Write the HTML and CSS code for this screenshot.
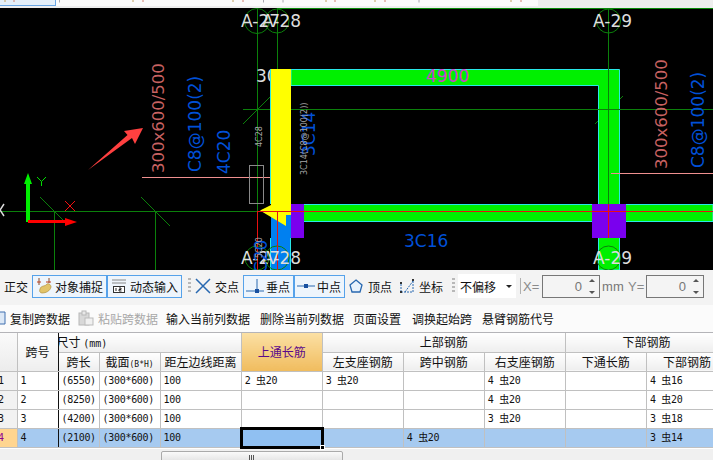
FILE: index.html
```html
<!DOCTYPE html>
<html lang="zh">
<head>
<meta charset="utf-8">
<title>梁平法表格</title>
<link rel="stylesheet" href="styles.css">
</head>
<body>
<div class="app">
  <svg class="top-strip" viewBox="0 0 713 8" width="713" height="8" xmlns="http://www.w3.org/2000/svg">
    <rect class="strip-bg" x="0" y="0" width="538" height="8"/>
    <rect class="strip-end" x="538" y="0" width="175" height="8"/>
    <rect class="strip-foot" x="0" y="6" width="713" height="2"/>
    <rect class="strip-tab" x="-1" y="-1" width="56.500" height="6.500"/>
    <path class="tick-a" d="M5 0V2M133 0V2M233 0V2M326 0V2M375 0V2M511 0V2"/>
    <path class="tick-b" d="M14 0V2M143 0V2M243 0V2M335 0V2M385 0V2M521 0V2"/>
    <path class="tick-c" d="M59.500 0V2.500M263.500 0V2.500M283 0V2.500M419 0V2.500"/>
  </svg>

  <svg class="cad" viewBox="0 8 713 262" width="713" height="262" xmlns="http://www.w3.org/2000/svg">
    <defs>
      <linearGradient id="labelLeft" gradientUnits="userSpaceOnUse" x1="241" x2="300" y1="0" y2="0">
        <stop offset="0.5" stop-color="#dddddd"/><stop offset="0.5" stop-color="#e08a3c"/>
        <stop offset="0.83" stop-color="#e08a3c"/><stop offset="0.83" stop-color="#dddddd"/>
      </linearGradient>
      <linearGradient id="labelRight" gradientUnits="userSpaceOnUse" x1="593" x2="632" y1="0" y2="0">
        <stop offset="0.14" stop-color="#dddddd"/><stop offset="0.14" stop-color="#d848d8"/>
        <stop offset="0.69" stop-color="#d848d8"/><stop offset="0.69" stop-color="#dddddd"/>
      </linearGradient>
    </defs>
    <rect x="0" y="8" width="713" height="262" fill="#000"/>
    <line x1="277" y1="8.500" x2="713" y2="8.500" stroke="#0a8a0a"/>

    <g class="axis-lines">
      <line x1="257.500" y1="9" x2="257.500" y2="270"/>
      <line x1="277.500" y1="9" x2="277.500" y2="270"/>
      <line x1="608.500" y1="9" x2="608.500" y2="270"/>
      <line x1="54.500" y1="211" x2="54.500" y2="270"/>
      <line x1="155.500" y1="211" x2="155.500" y2="270"/>
      <line x1="243" y1="109.500" x2="713" y2="109.500"/>
      <line x1="0" y1="211.500" x2="713" y2="211.500"/>
      <line x1="243" y1="124" x2="270" y2="97"/>
      <line x1="595" y1="124" x2="623" y2="96"/>
      <line x1="40" y1="197" x2="63" y2="220"/>
      <line x1="141" y1="197" x2="170" y2="226"/>
      <circle cx="257" cy="21" r="12.500"/>
      <circle cx="277" cy="21" r="12"/>
      <circle cx="608.500" cy="21" r="12"/>
    </g>

    <text class="lbl" x="256" y="82">30</text>

    <path class="beam" d="M291 69.500H619.500V270H598.500V85.500H291Z"/>
    <rect class="beam" x="298" y="204.500" width="415" height="17"/>
    <rect class="column" x="592" y="204" width="34" height="34"/>
    <rect class="blue-col" x="271" y="213" width="20" height="57"/>
    <path class="cyan" d="M270.500 69V204M270.500 238V270M290.500 238V270"/>
    <polygon class="yellow" points="271,69 291,69 291,204 291,215 286,215 286,226 260,210.500 271,205"/>
    <rect class="column" x="291" y="204" width="13" height="34"/>

    <g class="axis-lines">
      <circle cx="257" cy="258" r="12"/>
      <circle cx="277" cy="258" r="12"/>
      <circle cx="608.500" cy="258" r="12"/>
      <line x1="608.500" y1="9" x2="608.500" y2="204"/>
      <line x1="598" y1="109.500" x2="620" y2="109.500"/>
    </g>
    <g class="red-lines">
      <line x1="257" y1="211.500" x2="713" y2="211.500"/>
      <line x1="257.500" y1="211" x2="257.500" y2="270"/>
      <line x1="277.500" y1="211" x2="277.500" y2="270"/>
      <line x1="608.500" y1="204" x2="608.500" y2="238"/>
    </g>

    <line class="pink" x1="142" y1="177.500" x2="270" y2="177.500"/>
    <line class="pink" x1="611" y1="173.500" x2="713" y2="173.500"/>
    <rect class="grey-box" x="249.500" y="165.500" width="14" height="38"/>

    <text class="lbl" x="241" y="27">A-27</text>
    <text class="lbl" x="262" y="27">A-28</text>
    <text class="lbl" x="593" y="27">A-29</text>
    <text class="lbl" x="241" y="264" fill="url(#labelLeft)">A-27</text>
    <text class="lbl" x="262" y="264" fill="url(#labelLeft)">A-28</text>
    <text class="lbl" x="593" y="264" fill="url(#labelRight)">A-29</text>

    <text class="span-len" x="426" y="82">4900</text>
    <text class="rebar" x="404" y="247">3C16</text>

    <text class="size" transform="translate(164 173) rotate(-90)">300x600/500</text>
    <text class="rebar" transform="translate(201 172) rotate(-90)">C8@100(2)</text>
    <text class="rebar" transform="translate(230 174) rotate(-90)">4C20</text>
    <text class="size" transform="translate(667 169) rotate(-90)">300x600/500</text>
    <text class="rebar" transform="translate(704 168) rotate(-90)">C8@100(2)</text>
    <text class="rebar" transform="translate(315 156) rotate(-90)">3C14</text>
    <text class="rebar" transform="translate(267 284) rotate(-90)">3C20</text>
    <text class="tiny" transform="translate(262 147) rotate(-90)">4C28</text>
    <text class="tiny" transform="translate(307 175) rotate(-90)">3C14(C8@100(2))</text>
    <text class="tiny" transform="translate(262 258) rotate(-90)">5C20</text>

    <polygon class="arrow" points="143,128 124,131 127.500,135 88,170 132,138 135,144"/>

    <rect class="axis-y" x="26" y="181" width="4" height="41"/>
    <polygon class="axis-y" points="28,173 32,184 24,184"/>
    <rect class="axis-x" x="28" y="220" width="40" height="3"/>
    <polygon class="axis-x" points="77,222 65,218 65,226"/>
    <path class="tag-y" d="M37 177L41.500 181.500L46 177M41.500 181.500V186"/>
    <path class="tag-x" d="M65 201L75 211M75 201L65 211"/>
    <path class="edge-mark" d="M4 204L0 210L4 216"/>
  </svg>

  <div class="toolbar snap">
    <span class="tb-text first">正交</span>
    <span class="tb-btn on wide">
      <svg class="ico" viewBox="0 0 16 16"><path d="M3 0V7M13 0V5" stroke="#8a4a28" fill="none"/><path d="M1 4H5M10 4H15" stroke="#c04020"/><path d="M4 11C5 7 9 9 11 6C13 5 15 7 15 9C14 13 10 15 6 15C4 15 3 13 4 11Z" fill="#e2c46a" stroke="#b09040" stroke-width="0.700"/></svg>
      对象捕捉
    </span>
    <span class="tb-btn on wide">
      <svg class="ico" viewBox="0 0 16 16"><path d="M1 2H15M1 5H15" stroke="#888" fill="none"/><rect x="2.500" y="8.500" width="11" height="6" fill="#fff" stroke="#333"/><path d="M5 10V13M8 10H10V11.500H8V13H10.500" stroke="#222" fill="none"/></svg>
      动态输入
    </span>
    <span class="grip"></span>
    <span class="tb-btn plain cross">
      <svg class="ico" viewBox="0 0 16 16"><path d="M1 1L15 15M15 1L1 15" stroke="#2868b0" stroke-width="1.500"/></svg>
    </span>
    <span class="tb-text cross-label">交点</span>
    <span class="tb-btn on mid">
      <svg class="ico-w" viewBox="0 0 20 16"><path d="M1 13H19M12 1V13" stroke="#2868b0"/><rect x="10" y="11" width="4" height="4" fill="#1850a0"/></svg>
      垂点
    </span>
    <span class="tb-btn on mid">
      <svg class="ico-w" viewBox="0 0 20 16"><path d="M1 8H19" stroke="#2868b0"/><rect x="8" y="6" width="4" height="4" fill="#1850a0"/></svg>
      中点
    </span>
    <span class="tb-btn plain pent">
      <svg class="ico-p" viewBox="0 0 14 14"><path d="M7 1L13 6L11 13H3L1 6Z" fill="#e8f2fc" stroke="#2868b0" stroke-width="1.300"/></svg>
      顶点
    </span>
    <span class="tb-btn plain coord">
      <svg class="ico" viewBox="0 0 16 16"><path d="M2 14H14M2 14V6M14 14L14 3M6 14L14 3" stroke="#2868b0" stroke-dasharray="2 1" fill="none"/><rect x="13" y="1" width="2" height="2" fill="#333"/><rect x="1" y="4" width="2" height="2" fill="#333"/><rect x="1" y="13" width="2" height="2" fill="#333"/></svg>
      坐标
    </span>
    <span class="grip grip-late"></span>
    <span class="dropdown"><span>不偏移</span><i class="caret"></i></span>
    <span class="sep"></span>
    <span class="dim">X=</span>
    <span class="spin"><span>0</span><i class="spin-arrows"></i></span>
    <span class="unit">mm</span>
    <span class="dim y-label">Y=</span>
    <span class="spin"><span>0</span><i class="spin-arrows"></i></span>
  </div>

  <div class="toolbar actions">
    <span class="act copy">
      <svg class="ico-s" viewBox="0 0 6 14"><path d="M-6 1H5V13H-6Z" fill="#dce8f6" stroke="#4070b0"/></svg>
      复制跨数据
    </span>
    <span class="act paste off">
      <svg class="ico" viewBox="0 0 16 16"><rect x="1" y="3" width="10" height="12" fill="#d8d8d8" stroke="#b8b8b8"/><rect x="4" y="1" width="4" height="4" fill="#e8e8e8" stroke="#b8b8b8"/><rect x="7" y="8" width="8" height="7" fill="#f0f0f0" stroke="#bbb"/></svg>
      粘贴跨数据
    </span>
    <span class="act input">输入当前列数据</span>
    <span class="act del">删除当前列数据</span>
    <span class="act page">页面设置</span>
    <span class="act swap">调换起始跨</span>
    <span class="act code">悬臂钢筋代号</span>
  </div>

  <div class="grid-wrap">
    <table class="grid">
      <colgroup>
        <col class="c-row"><col class="c-no"><col class="c-len"><col class="c-sec"><col class="c-dist">
        <col class="c-std"><col class="c-std"><col class="c-std"><col class="c-std"><col class="c-std"><col class="c-std">
      </colgroup>
      <thead>
        <tr>
          <th class="corner" rowspan="2"></th>
          <th class="thick" rowspan="2">跨号</th>
          <th class="group-left" colspan="3"><span>尺寸 <span class="mono">(mm)</span></span></th>
          <th class="active" rowspan="2">上通长筋</th>
          <th colspan="3">上部钢筋</th>
          <th colspan="2">下部钢筋</th>
        </tr>
        <tr>
          <th>跨长</th>
          <th>截面<span class="mono small">(B*H)</span></th>
          <th>距左边线距离</th>
          <th>左支座钢筋</th>
          <th>跨中钢筋</th>
          <th>右支座钢筋</th>
          <th>下通长筋</th>
          <th>下部钢筋</th>
        </tr>
      </thead>
      <tbody>
        <tr>
          <td class="rh">1</td><td class="thick">1</td><td>(6550)</td><td>(300*600)</td><td>100</td>
          <td>2 虫20</td><td>3 虫20</td><td></td><td>4 虫20</td><td></td><td>4 虫16</td>
        </tr>
        <tr>
          <td class="rh">2</td><td class="thick">2</td><td>(8250)</td><td>(300*600)</td><td>100</td>
          <td></td><td></td><td></td><td>4 虫20</td><td></td><td>4 虫20</td>
        </tr>
        <tr>
          <td class="rh">3</td><td class="thick">3</td><td>(4200)</td><td>(300*600)</td><td>100</td>
          <td></td><td></td><td></td><td>3 虫20</td><td></td><td>3 虫18</td>
        </tr>
        <tr class="sel">
          <td class="rh">4</td><td class="thick">4</td><td>(2100)</td><td>(300*600)</td><td>100</td>
          <td class="cur"><i class="handle"></i></td><td></td><td>4 虫20</td><td></td><td></td><td>3 虫14</td>
        </tr>
      </tbody>
    </table>
  </div>
  <div class="hscroll"><div class="thumb"><span></span></div></div>
</div>
</body>
</html>
```

FILE: styles.css
```css
* { box-sizing: border-box; }
html, body { margin: 0; padding: 0; background: #f2f2f2; }
body { font-family: "Noto Sans CJK SC", "Liberation Sans", sans-serif; font-size: 12px; color: #111; }
.app { width: 713px; height: 460px; display: flex; flex-direction: column; overflow: hidden; }

.top-strip { display: block; flex: none; }
.strip-bg { fill: #fbfbfb; }
.strip-end { fill: #eeeeee; }
.strip-foot { fill: #eeeeee; }
.strip-tab { fill: #e4eff9; stroke: #6aa6e4; }
.tick-a { stroke: #c0a060; }
.tick-b { stroke: #d08070; }
.tick-c { stroke: #a8a8b0; }

.cad { display: block; flex: none; }
.axis-lines line, .axis-lines circle { stroke: #0b800b; stroke-width: 1; fill: none; }
.beam { fill: #00f000; stroke: #28e8e8; stroke-width: 1; }
.column { fill: #7a00ee; }
.blue-col { fill: #0080f0; }
.cyan { stroke: #28e8e8; fill: none; }
.yellow { fill: #ffff00; }
.red-lines line { stroke: #e81010; stroke-width: 1; }
.pink { stroke: #f09090; stroke-width: 1; }
.grey-box { fill: none; stroke: #8a8a8a; }
.lbl { font-family: "DejaVu Sans", sans-serif; font-size: 17px; fill: #dddddd; }
.span-len { font-family: "DejaVu Sans", sans-serif; font-size: 17px; fill: #d040d0; }
.rebar { font-family: "DejaVu Sans", sans-serif; font-size: 17px; fill: #0050d8; }
.size { font-family: "DejaVu Sans", sans-serif; font-size: 16.500px; fill: #c86262; }
.tiny { font-family: "DejaVu Sans", sans-serif; font-size: 8px; fill: #a8a8a8; }
.arrow { fill: #ff4040; }
.axis-y { fill: #00f000; }
.axis-x { fill: #ff0000; }
.tag-y { stroke: #00e000; fill: none; }
.tag-x { stroke: #f01010; fill: none; }
.edge-mark { stroke: #ddd; stroke-width: 1.500; fill: none; }

.toolbar { display: flex; align-items: center; flex: none; white-space: nowrap; }
.snap { height: 35px; padding-bottom: 3px; background: #f3f3f3; }
.actions { height: 28px; background: #fbfbfb; border-bottom: 1px solid #b4b4b8; padding-bottom: 1px; }

.tb-text.first { margin-left: 4px; width: 28px; }
.tb-btn { display: flex; align-items: center; height: 23px; }
.tb-btn.on { background: #eef5fc; border: 1px solid #56a2ea; }
.tb-btn.wide { width: 75px; padding-left: 3px; gap: 3px; }
.tb-btn.mid { width: 51px; padding-left: 1px; gap: 1px; }
.tb-btn.pent { margin-left: 4px; gap: 5px; }
.tb-btn.coord { margin-left: 7px; gap: 4px; }
.cross-label { margin-left: 4px; margin-right: 4px; }
.ico { width: 16px; height: 16px; flex: none; }
.ico-w { width: 20px; height: 16px; flex: none; }
.ico-p { width: 14px; height: 14px; flex: none; }
.ico-s { width: 6px; height: 14px; flex: none; }
.grip { width: 3px; height: 16px; margin: 0 4px 0 6px; flex: none;
  background: repeating-linear-gradient(#b8b8b8 0 2px, transparent 2px 4px); }
.grip-late { margin: 0 3px 0 9px; }

.dropdown { display: flex; align-items: center; justify-content: space-between; width: 58px; height: 24px; padding: 0 4px 0 2px; background: #fff; }
.caret { width: 0; height: 0; border: 3px solid transparent; border-top: 3px solid #222; border-bottom: 0; }
.sep { width: 1px; height: 16px; margin: 0 2px 0 4px; background: #b0b0b0; }
.dim { color: #8a8a8a; width: 16px; font-family: "Liberation Sans", sans-serif; font-size: 13px; }
.y-label { margin-left: 5px; width: 15px; }
.unit { color: #777; font-family: "Liberation Sans", sans-serif; font-size: 13px; width: 21px; margin-left: 2px; }
.spin { display: flex; align-items: center; justify-content: flex-end; gap: 6px; width: 58px; height: 23px; margin-left: 3px;
  background: #f4f4f4; border: 1px solid #777; padding-right: 3px; color: #777; font-family: "Liberation Sans", sans-serif; font-size: 13px; }
.spin-arrows { display: block; width: 8px; height: 15px; position: relative; }
.spin-arrows::before, .spin-arrows::after { content: ""; position: absolute; left: 1px; width: 0; height: 0; border: 3px solid transparent; }
.spin-arrows::before { top: 0; border-top: 0; border-bottom: 3px solid #555; }
.spin-arrows::after { bottom: 0; border-bottom: 0; border-top: 3px solid #555; }

.act { display: flex; align-items: center; }
.copy { gap: 4px; width: 78px; }
.paste { gap: 4px; width: 88px; }
.off { color: #a8a8a8; }
.input { width: 94px; }
.del { width: 93px; }
.page { width: 59px; }
.swap { width: 70px; }
.code { width: 72px; }

.grid-wrap { height: 118px; flex: none; overflow: hidden; background: #f0f0f0; }
.grid { border-collapse: collapse; table-layout: fixed; width: 728px; background: #fff; font-family: "Noto Sans CJK SC", sans-serif; font-size: 12px; }
.c-row { width: 17px; }
.c-no { width: 41px; }
.c-len { width: 41px; }
.c-sec { width: 61px; }
.c-dist { width: 81px; }
.c-std { width: 81px; }
.grid th, .grid td { border: 1px solid #c0c0c0; padding: 0; overflow: hidden; white-space: nowrap; height: 19px; line-height: 14px; }
.grid th { font-weight: 400; background: linear-gradient(#ffffff, #eeeeee); text-align: center; }
.grid tr:first-child th { border-top: 0; }
.grid td { padding-left: 3px; font-family: "DejaVu Sans Mono", "Noto Sans CJK SC", monospace; font-size: 10px; letter-spacing: -0.300px; }
.grid th.group-left { text-align: left; }
.grid th.group-left > span { margin-left: -2px; }
.mono { font-family: "DejaVu Sans Mono", monospace; font-size: 10px; line-height: 1; }
.small { font-size: 8px; }
.grid .corner { background: linear-gradient(#fafafa, #ececec); border-left: 0; }
.grid .thick { border-right: 1px solid #111; }
.grid th.active { background: linear-gradient(#fbe0a4, #f0bc5e); color: #5a0a8a; }
.grid td.rh { background: #f2f2f2; padding-left: 0; text-indent: -2px; border-left: 0; }
.sel td { background: #a6caf0; }
.grid .sel td.rh { background: #ffd590; color: #900090; }
.grid td.cur { background: #90c0f2; border: 3px solid #000; overflow: visible; position: relative; padding: 0; }
.handle { position: absolute; right: -4px; bottom: -4px; width: 5px; height: 5px; background: #000; border: 1px solid #fff; z-index: 1; }

.hscroll { height: 9px; flex: none; padding-left: 161px; background: #f0f0f0; }
.thumb { display: flex; justify-content: center; width: 182px; height: 11px; background: linear-gradient(#fafafa, #e4e4e4); border: 1px solid #aaa; border-radius: 2px 2px 0 0; }
.thumb span { width: 6px; height: 5px; margin-top: 3px; background: repeating-linear-gradient(90deg, #555 0 1px, transparent 1px 2px); }
```
